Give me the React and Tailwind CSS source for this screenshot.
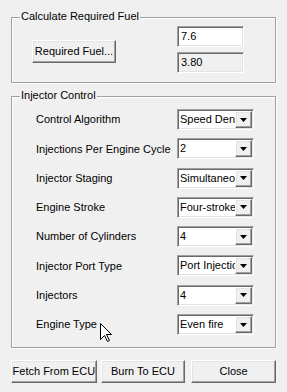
const raised =
  "border border-t-white border-l-white border-b-[#696969] border-r-[#696969] shadow-[inset_-1px_-1px_0_#a0a0a0,inset_1px_1px_0_#e3e3e3] bg-[#f0f0f0]";
const sunken =
  "border border-t-[#a0a0a0] border-l-[#a0a0a0] border-b-white border-r-white shadow-[inset_1px_1px_0_#696969,inset_-1px_-1px_0_#e3e3e3]";

const rows = [
  { label: "Control Algorithm", value: "Speed Density" },
  { label: "Injections Per Engine Cycle", value: "2" },
  { label: "Injector Staging", value: "Simultaneous" },
  { label: "Engine Stroke", value: "Four-stroke" },
  { label: "Number of Cylinders", value: "4" },
  { label: "Injector Port Type", value: "Port Injection" },
  { label: "Injectors", value: "4" },
  { label: "Engine Type", value: "Even fire" },
];

function GroupBox({ title, className, children }) {
  return (
    <div className={`relative border border-[#a0a0a0] shadow-[1px_1px_0_#fff,inset_1px_1px_0_#fff] ${className}`}>
      <span className="absolute -top-[8px] left-[8px] px-[1px] bg-[#f0f0f0] leading-[13px]">{title}</span>
      {children}
    </div>
  );
}

function Combo({ value }) {
  return (
    <div className={`relative w-[77px] h-[21px] bg-white overflow-hidden ${sunken}`}>
      <span className="absolute left-[2px] top-[3px] whitespace-nowrap leading-[13px]">{value}</span>
      <div className={`absolute right-[1px] top-[1px] w-[17px] h-[17px] flex items-center justify-center ${raised}`}>
        <svg width="7" height="4" viewBox="0 0 7 4">
          <path d="M0 0h7L3.5 4z" fill="#000" />
        </svg>
      </div>
    </div>
  );
}

function Button({ children, className }) {
  return (
    <button className={`h-[23px] flex items-center justify-center leading-[13px] ${raised} ${className}`}>
      {children}
    </button>
  );
}

export default function App() {
  return (
    <div
      className="relative w-[287px] h-[392px] bg-[#f0f0f0] text-black text-[11px] pt-[17px] px-[11px]"
      style={{ fontFamily: '"Liberation Sans", Arial, sans-serif' }}
    >
      {/* Calculate Required Fuel */}
      <GroupBox title="Calculate Required Fuel" className="w-[265px] h-[66px] flex">
        <Button className="w-[84px] mt-[22px] ml-[20px]">Required Fuel...</Button>
        <div className="ml-[61px] mt-[8px] flex flex-col gap-[5px]">
          <div className={`w-[67px] h-[21px] bg-white px-[3px] pt-[3px] leading-[13px] ${sunken}`}>7.6</div>
          <div className={`w-[67px] h-[21px] bg-[#f0f0f0] px-[3px] pt-[3px] leading-[13px] ${sunken}`}>3.80</div>
        </div>
      </GroupBox>

      {/* Injector Control */}
      <GroupBox title="Injector Control" className="w-[265px] h-[252px] mt-[13px] pt-[12px] pl-[24px] flex flex-col gap-[8.3px]">
        {rows.map((r) => (
          <div key={r.label} className="flex items-center h-[21px]">
            <span className="w-[141px] whitespace-nowrap">{r.label}</span>
            <Combo value={r.value} />
          </div>
        ))}
      </GroupBox>

      {/* Buttons */}
      <div className="flex mt-[12px]">
        <Button className="w-[86px]">Fetch From ECU</Button>
        <Button className="w-[85px] ml-[4px]">Burn To ECU</Button>
        <Button className="w-[85px] ml-[6px]">Close</Button>
      </div>

      {/* mouse cursor */}
      <svg className="absolute left-[100px] top-[323px]" width="13" height="20" viewBox="0 0 13 20">
        <path d="M0.5 0.5V16.5L4.5 12.5L7.5 18.5L9.5 17.5L6.5 11.5H11.5Z" fill="#fff" stroke="#000" strokeLinejoin="miter" />
      </svg>
    </div>
  );
}
